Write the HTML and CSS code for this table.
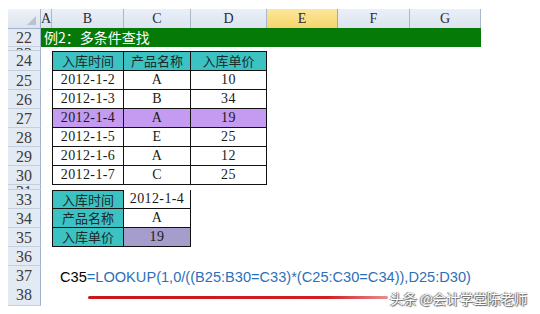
FILE: index.html
```html
<!DOCTYPE html>
<html>
<head>
<meta charset="utf-8">
<link rel="stylesheet" href="styles.css">
</head>
<body>
<div class="page">
  <div class="sheet">
    <div class="row hdr">
      <div class="rh corner"><span class="tri"></span></div>
      <div class="ch">A</div><div class="ch">B</div><div class="ch">C</div><div class="ch">D</div>
      <div class="ch sel">E</div><div class="ch">F</div><div class="ch">G</div>
    </div>
    <div class="row r19">
      <div class="rh">22</div>
      <div class="title">例2：多条件查找</div>
    </div>
    <div class="row r4">
      <div class="rh clip"><span>23</span></div>
    </div>
    <div class="row r20">
      <div class="rh">24</div><div></div>
      <div class="c th first top">入库时间</div><div class="c th top">产品名称</div><div class="c th top">入库单价</div>
    </div>
    <div class="row r19">
      <div class="rh">25</div><div></div>
      <div class="c first num">2012-1-2</div><div class="c num">A</div><div class="c num">10</div>
    </div>
    <div class="row r19">
      <div class="rh">26</div><div></div>
      <div class="c first num">2012-1-3</div><div class="c num">B</div><div class="c num">34</div>
    </div>
    <div class="row r19">
      <div class="rh">27</div><div></div>
      <div class="c first num hl">2012-1-4</div><div class="c num hl">A</div><div class="c num hl">19</div>
    </div>
    <div class="row r19">
      <div class="rh">28</div><div></div>
      <div class="c first num">2012-1-5</div><div class="c num">E</div><div class="c num">25</div>
    </div>
    <div class="row r19">
      <div class="rh">29</div><div></div>
      <div class="c first num">2012-1-6</div><div class="c num">A</div><div class="c num">12</div>
    </div>
    <div class="row r19">
      <div class="rh">30</div><div></div>
      <div class="c first num">2012-1-7</div><div class="c num">C</div><div class="c num">25</div>
    </div>
    <div class="row r5">
      <div class="rh clip"><span>31</span></div>
    </div>
    <div class="row r19">
      <div class="rh">33</div><div></div>
      <div class="c th first top">入库时间</div><div class="c num">2012-1-4</div>
    </div>
    <div class="row r19">
      <div class="rh">34</div><div></div>
      <div class="c th first">产品名称</div><div class="c num">A</div>
    </div>
    <div class="row r19">
      <div class="rh">35</div><div></div>
      <div class="c th first">入库单价</div><div class="c num res">19</div>
    </div>
    <div class="row r19">
      <div class="rh">36</div>
    </div>
    <div class="row r19">
      <div class="rh">37</div>
      <div class="formula"><span class="ref">C35</span>=LOOKUP(1,0/((B25:B30=C33)*(C25:C30=C34)),D25:D30)</div>
    </div>
    <div class="row r21">
      <div class="rh">38</div>
      <div class="under"><div class="redline"></div></div>
    </div>
  </div>
  <div class="wm">头条 @会计学堂陈老师</div>
</div>
</body>
</html>
```

FILE: styles.css
```css
html, body {
  margin: 0;
  padding: 0;
  background: #ffffff;
}
.page {
  position: relative;
  width: 540px;
  height: 314px;
  overflow: hidden;
  background: #fff;
}
.sheet {
  padding-top: 9px;
  padding-left: 8px;
  display: flex;
  flex-direction: column;
}
.row {
  display: grid;
  grid-template-columns: 33px 11px 72px 67px 76px 71px 72px 71px;
  width: 473px;
}
.hdr { height: 19px; }
.r19 { height: 19px; }
.r20 { height: 20px; }
.r21 { height: 21px; }
.r4 { height: 4px; }
.r5 { height: 5px; }

.rh {
  background: #e4eaf4;
  border-right: 1px solid #9fb3cc;
  border-bottom: 1px solid #c2cfe0;
  box-sizing: border-box;
  font-family: "Liberation Serif", serif;
  font-size: 16px;
  color: #3c3c3c;
  text-align: center;
  line-height: 19px;
  overflow: hidden;
}
.rh.clip span {
  display: block;
  margin-top: -3px;
}
.corner {
  position: relative;
  background: linear-gradient(#eef2f8, #dde4ee);
  border-bottom: 1px solid #9fb3cc;
}
.tri {
  position: absolute;
  right: 4px;
  bottom: 3px;
  width: 0;
  height: 0;
  border-left: 9px solid transparent;
  border-bottom: 9px solid #b9c3cf;
}
.ch {
  background: linear-gradient(#eaf0f8, #dbe3ef);
  border-right: 1px solid #a9b8cb;
  border-bottom: 1px solid #9fb3cc;
  box-sizing: border-box;
  font-family: "Liberation Serif", serif;
  font-size: 14px;
  color: #2a2a3a;
  text-align: center;
  line-height: 19px;
}
.ch.sel {
  background: linear-gradient(#fbe79c, #f6d56b);
  border-right: 1px solid #c8a84c;
}
.title {
  grid-column: 2 / 9;
  background: #067a07;
  color: #ffffff;
  font-family: "Noto Sans CJK SC", sans-serif;
  font-size: 14px;
  line-height: 19px;
  padding-left: 3px;
}
.c {
  box-sizing: border-box;
  border-right: 1px solid #111;
  border-bottom: 1px solid #111;
  text-align: center;
  line-height: 18px;
  color: #1a1a1a;
  background: #ffffff;
}
.c.first { border-left: 1px solid #111; }
.c.top { border-top: 1px solid #111; line-height: 17px; }
.r20 .c.top { line-height: 18px; }
.c.th {
  background: #3cc2c3;
  font-family: "Noto Sans CJK SC", sans-serif;
  font-size: 13px;
  color: #1d2a2a;
}
.c.num {
  font-family: "Liberation Serif", serif;
  font-size: 14px;
  letter-spacing: 0.4px;
}
.c.hl { background: #c49bf1; }
.c.res { background: #a59dcb; }
.formula {
  grid-column: 2 / 9;
  font-family: "Liberation Sans", Arial, sans-serif;
  font-size: 14.6px;
  line-height: 19px;
  padding-left: 19px;
  padding-top: 2px;
  color: #2e6fba;
  white-space: nowrap;
}
.formula .ref { color: #000; }
.under {
  grid-column: 2 / 9;
  padding-top: 11px;
  padding-left: 47px;
}
.redline {
  width: 300px;
  height: 3px;
  border-radius: 2px;
  background: linear-gradient(90deg, #c8161c 0%, #d21e22 80%, rgba(210,30,34,0.5) 100%);
}
.wm {
  position: absolute;
  left: 390px;
  top: 288px;
  font-family: "Noto Sans CJK SC", sans-serif;
  font-size: 13.5px;
  color: #ffffff;
  text-shadow: 0 0 1px #555, 1px 1px 1px #666, -1px 0 1px #777;
  white-space: nowrap;
}
```
